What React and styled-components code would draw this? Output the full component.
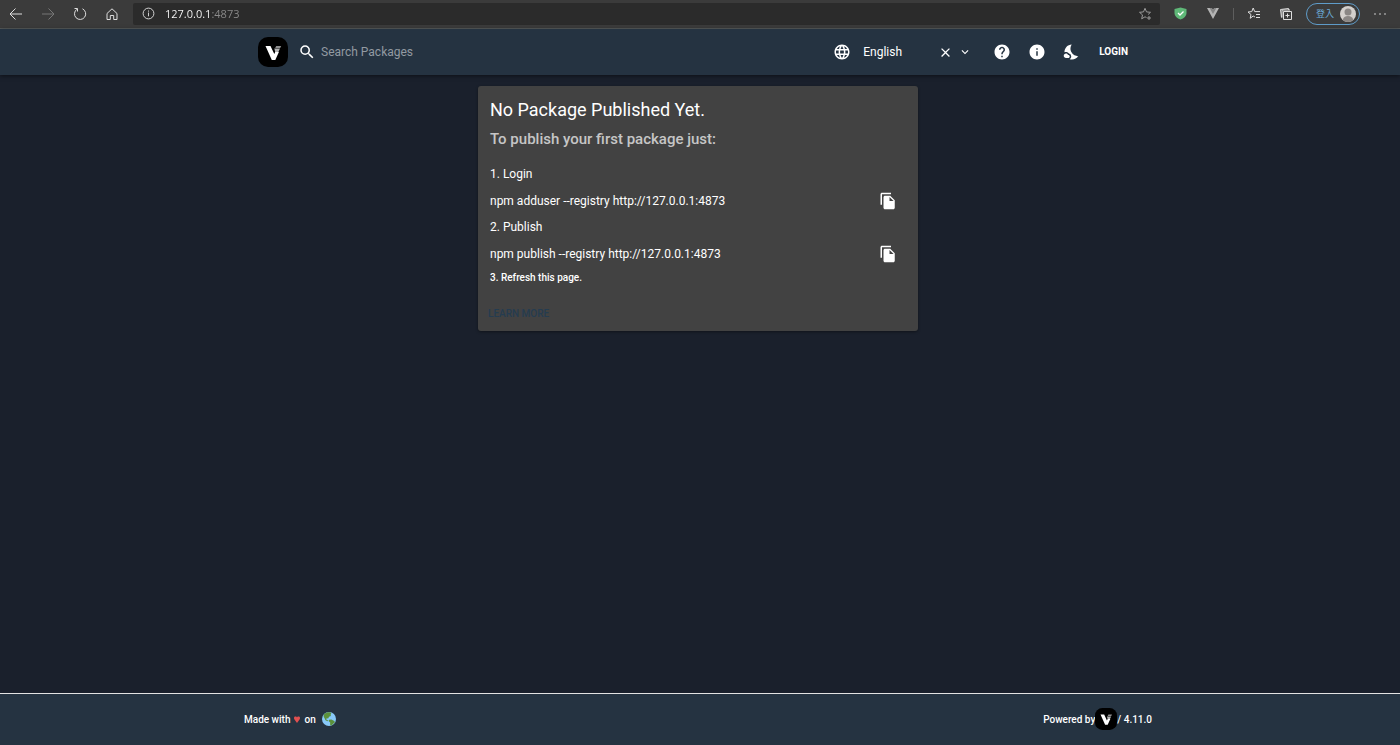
import React from "react";
import styled, { createGlobalStyle, css } from "styled-components";
import {
  MdSearch,
  MdLanguage,
  MdHelp,
  MdInfo,
  MdNightsStay,
  MdFileCopy,
  MdClose,
  MdExpandMore,
} from "react-icons/md";

const Global = createGlobalStyle`
  *, *::before, *::after { box-sizing: border-box; }
  body {
    margin: 0;
    background: #1a202c;
    color: #fff;
    font-family: Roboto, "Liberation Sans", sans-serif;
    font-size: 12px;
  }
  h1, h2, p { margin: 0; padding: 0; }
  button, input { font: inherit; color: inherit; margin: 0; }
`;

const Window = styled.div`
  min-height: 100vh;
  display: flex;
  flex-direction: column;
`;

/* Browser toolbar */

const BrowserBar = styled.div`
  display: flex;
  align-items: center;
  height: 29px;
  padding: 0 10px 1px 4px;
  background: #3b3b3b;
  border-bottom: 1px solid #565a5b;
  color: #dedede;
`;

const PlainButton = styled.button`
  display: inline-flex;
  align-items: center;
  justify-content: center;
  flex: none;
  padding: 0;
  border: 0;
  background: none;
  cursor: pointer;
`;

const BrowserButton = styled(PlainButton)`
  width: ${(p) => p.$width || 24}px;
  height: 22px;
  color: ${(p) => p.$color || "#dedede"};
`;

const NavButtons = styled.nav`
  display: flex;
  gap: 8px;
`;

const AddressBar = styled.label`
  display: flex;
  flex: 1;
  align-items: center;
  gap: 10px;
  height: 22px;
  margin: 0 9px;
  padding: 0 8px 0 9px;
  border-radius: 2px;
  background: #2b2b2b;
`;

const AddressInput = styled.input`
  flex: 1;
  min-width: 0;
  padding: 0;
  border: 0;
  outline: 0;
  font-family: "Open Sans", sans-serif;
  font-size: 11px;
  line-height: 16px;
  background: linear-gradient(to right, #fff 46px, #8c8c8c 46px);
  background-clip: text;
  -webkit-text-fill-color: transparent;
`;

const Extensions = styled.div`
  display: flex;
  align-items: center;
  gap: 8px;
`;

const Divider = styled.span`
  width: 1px;
  height: 12px;
  background: #5e5e5e;
`;

const ProfileButton = styled(PlainButton)`
  gap: 6px;
  height: 22px;
  padding: 0 3px 0 9px;
  margin-right: 2px;
  border: 1px solid #5f9cc9;
  border-radius: 11px;
  color: #6cabd8;
  font-family: "Noto Sans CJK TC", sans-serif;
  font-size: 9px;
`;

/* Application header */

const Header = styled.header`
  position: relative;
  height: 46px;
  padding-right: 4px;
  background: #253341;
  box-shadow: 0 1px 4px rgba(0, 0, 0, 0.5);
`;

const HeaderInner = styled.div`
  display: flex;
  align-items: center;
  justify-content: space-between;
  width: 100%;
  max-width: 908px;
  height: 100%;
  margin: 0 auto;
  padding: 0 14px;
`;

const HeaderGroup = styled.div`
  display: flex;
  align-items: center;
`;

const HomeLink = styled.a`
  display: flex;
`;

const SearchField = styled.label`
  display: flex;
  align-items: center;
  gap: 5px;
  margin-left: 10px;
`;

const TextInput = styled.input`
  width: ${(p) => p.$width}px;
  padding: 0;
  border: 0;
  outline: 0;
  background: none;
  line-height: 16px;
  &::placeholder {
    color: #929aa1;
    opacity: 1;
  }
`;

const LanguageField = styled.label`
  display: flex;
  align-items: center;
  gap: 12px;
`;

const SmallIconButton = styled(PlainButton)`
  width: 19px;
  height: 20px;
`;

const ActionGroup = styled.div`
  display: flex;
  align-items: center;
  margin-left: 10px;
`;

const IconButton = styled(PlainButton)`
  width: 35px;
  height: 35px;
`;

const LoginButton = styled(PlainButton)`
  padding: 4px 10px;
  font-size: 10px;
  font-weight: 700;
  line-height: 14px;
`;

/* Help card */

const Main = styled.main`
  flex: 1;
  padding: 11px 4px 11px 0;
`;

const Card = styled.section`
  width: 100%;
  max-width: 440px;
  margin: 0 auto;
  padding-bottom: 4px;
  border-radius: 3px;
  background: #424242;
  box-shadow: 0 1px 3px rgba(0, 0, 0, 0.4);
`;

const CardContent = styled.div`
  padding: 12px 13px 0 12px;
`;

const Title = styled.h1`
  font-size: 18px;
  font-weight: 400;
  line-height: 24px;
`;

const Subtitle = styled.h2`
  margin-top: 6px;
  color: #c6c6c6;
  font-size: 15px;
  font-weight: 500;
  line-height: 22px;
`;

const Steps = styled.div`
  margin-top: 16px;
`;

const StepLabel = styled.p`
  line-height: 17px;
  ${(p) =>
    p.$small &&
    css`
      font-size: 10px;
      font-weight: 500;
      line-height: 12px;
    `}
`;

const CommandRow = styled.div`
  display: flex;
  align-items: center;
  justify-content: space-between;
  height: 36px;
`;

const CardActions = styled.div`
  margin-top: 17px;
  padding: 0 4px;
`;

const LearnMore = styled.a`
  display: inline-block;
  padding: 6px;
  color: #253c50;
  font-size: 10px;
  font-weight: 500;
  line-height: 14px;
  text-decoration: none;
  vertical-align: top;
`;

/* Footer */

const Footer = styled.footer`
  padding: 0 4px 1px 0;
  border-top: 1px solid #e3e3e3;
  background: #253341;
  font-size: 10px;
  font-weight: 500;
`;

const FooterInner = styled.div`
  display: flex;
  align-items: center;
  justify-content: space-between;
  max-width: 908px;
  height: 50px;
  margin: 0 auto;
`;

const FooterText = styled.div`
  display: flex;
  align-items: center;
  gap: ${(p) => p.$gap || 0}px;
`;

const Planet = styled.svg`
  margin-left: 2px;
`;

function Stroke({ size = 14, width = 1, children }) {
  return (
    <svg
      width={size}
      height={size}
      viewBox="0 0 14 14"
      fill="none"
      stroke="currentColor"
      strokeWidth={width}
      aria-hidden="true"
    >
      {children}
    </svg>
  );
}

function Logo({ size }) {
  return (
    <svg width={size} height={size} viewBox="0 0 30 30" role="img" aria-label="Verdaccio">
      <rect width="30" height="30" rx="10" fill="#000" />
      <path d="M7.500 9H12.500l3.800 8 .9-1.900h3.700L17.300 23H13.800z" fill="#fff" />
      <path d="M18.200 9H23.200l-1 2h-5z" fill="#8f8f8f" />
      <path d="M16.300 11.500h5.700l-1.600 3.600h-3.200z" fill="#b5b5b5" />
    </svg>
  );
}

function Globe() {
  return (
    <Planet width="14" height="14" viewBox="0 0 36 36" role="img" aria-label="Earth">
      <circle cx="18" cy="18" r="18" fill="#88c9f9" />
      <path
        d="M6 5c4-4 10-5 16-4l2 3-2 3 1 3-5 2-2 5-4-1-1 3 5 3-2 2-5-3-3-6C4 12 3 8 6 5zM18 20l6-1 8 4 1 4-5 4-3 4-4-1v-7l-4-4z"
        fill="#5c913b"
      />
    </Planet>
  );
}

function Browser() {
  return (
    <BrowserBar>
      <NavButtons aria-label="Browser navigation">
        <BrowserButton aria-label="Back">
          <Stroke><path d="M13 7H1M6.500 1.500L1 7l5.500 5.500" /></Stroke>
        </BrowserButton>
        <BrowserButton aria-label="Forward" $color="#777">
          <Stroke><path d="M1 7h12M7.500 1.500L13 7l-5.500 5.500" /></Stroke>
        </BrowserButton>
        <BrowserButton aria-label="Reload">
          <Stroke><path d="M9.500 1.800A5.600 5.600 0 1 1 4 2.200M1.500 1.500h3v3" /></Stroke>
        </BrowserButton>
        <BrowserButton aria-label="Home">
          <Stroke><path d="M2 6.500L7 1.800l5 4.700v6H8.700V8.500H5.300v4H2z" /></Stroke>
        </BrowserButton>
      </NavButtons>
      <AddressBar>
        <Stroke size={13}>
          <circle cx="7" cy="7" r="5.800" />
          <path d="M7 6v4M7 3.800v1.200" />
        </Stroke>
        <AddressInput aria-label="Address" defaultValue="127.0.0.1:4873" />
        <BrowserButton aria-label="Add to favorites" $width={14} $color="#9a9a9a">
          <Stroke>
            <path d="M8.500 10.500L7 9.800l-3.300 2 .8-3.900L1.500 5.300l4-.4L7 1.300l1.500 3.600 4 .4-2.400 2.200M11 9v4M9 11h4" />
          </Stroke>
        </BrowserButton>
      </AddressBar>
      <Extensions>
        <BrowserButton aria-label="Security shield">
          <svg width="13" height="13" viewBox="0 0 13 13" aria-hidden="true">
            <path d="M6.500.5L12.500 2v4c0 3-2.500 5.300-6 6.500C3 11.300.5 9 .5 6V2z" fill="#5fb878" />
            <path d="M4 6l2 2 3.500-3.500" stroke="#fff" strokeWidth="1.300" fill="none" />
          </svg>
        </BrowserButton>
        <BrowserButton aria-label="Vue devtools">
          <svg width="12" height="11" viewBox="0 0 12 11" aria-hidden="true">
            <path d="M0 0h4.800L6 2l1.200-2H12L6 11z" fill="#b4b4b4" />
            <path d="M2.600 0h2.200L6 2l1.200-2h2.200L6 6z" fill="#858585" />
          </svg>
        </BrowserButton>
        <Divider />
        <BrowserButton aria-label="Favorites">
          <Stroke>
            <path d="M8 10l-1.800-1-3 2.300.8-3.800L1 5l3.800-.4L6.200 1l1.500 3.600H13M9 7.500h4M9 10.500h4" />
          </Stroke>
        </BrowserButton>
        <BrowserButton aria-label="Collections">
          <Stroke>
            <path d="M4.500 4.500h8v8h-8zM8.500 6.500v4M6.500 8.500h4M2.500 10.500l-1-8 8-1 .2 1.500M3 10.500V3h8" />
          </Stroke>
        </BrowserButton>
        <ProfileButton>
          登入
          <svg width="16" height="16" viewBox="0 0 16 16" aria-hidden="true">
            <circle cx="8" cy="8" r="8" fill="#d4d0cd" />
            <circle cx="8" cy="6" r="3.500" fill="#8b8785" />
            <path d="M2.800 14c.5-3 2.400-4 5.200-4s4.700 1 5.200 4A8 8 0 0 1 2.800 14z" fill="#8b8785" />
          </svg>
        </ProfileButton>
        <BrowserButton aria-label="Settings and more" $width={20}>
          <svg width="12" height="2" viewBox="0 0 12 2" fill="currentColor" aria-hidden="true">
            <circle cx="1" cy="1" r=".8" />
            <circle cx="6" cy="1" r=".8" />
            <circle cx="11" cy="1" r=".8" />
          </svg>
        </BrowserButton>
      </Extensions>
    </BrowserBar>
  );
}

function Command({ children }) {
  return (
    <CommandRow>
      <span>{children}</span>
      <IconButton aria-label="Copy to clipboard">
        <MdFileCopy size={18} />
      </IconButton>
    </CommandRow>
  );
}

export default function App() {
  return (
    <Window>
      <Global />
      <Browser />
      <Header>
        <HeaderInner>
          <HeaderGroup>
            <HomeLink href="#home"><Logo size={30} /></HomeLink>
            <SearchField>
              <MdSearch size={18} aria-hidden="true" />
              <TextInput $width={240} placeholder="Search Packages" aria-label="Search Packages" />
            </SearchField>
          </HeaderGroup>
          <HeaderGroup>
            <LanguageField>
              <MdLanguage size={18} aria-hidden="true" />
              <TextInput $width={73} defaultValue="English" aria-label="Language" />
            </LanguageField>
            <SmallIconButton aria-label="Clear"><MdClose size={15} /></SmallIconButton>
            <SmallIconButton aria-label="Open"><MdExpandMore size={14} /></SmallIconButton>
            <ActionGroup>
              <IconButton aria-label="Help"><MdHelp size={18} /></IconButton>
              <IconButton aria-label="Information"><MdInfo size={18} /></IconButton>
              <IconButton aria-label="Dark mode"><MdNightsStay size={18} /></IconButton>
            </ActionGroup>
            <LoginButton>LOGIN</LoginButton>
          </HeaderGroup>
        </HeaderInner>
      </Header>
      <Main>
        <Card>
          <CardContent>
            <Title>No Package Published Yet.</Title>
            <Subtitle>To publish your first package just:</Subtitle>
            <Steps>
              <StepLabel>1. Login</StepLabel>
              <Command>npm adduser --registry http://127.0.0.1:4873</Command>
              <StepLabel>2. Publish</StepLabel>
              <Command>npm publish --registry http://127.0.0.1:4873</Command>
              <StepLabel $small>3. Refresh this page.</StepLabel>
            </Steps>
          </CardContent>
          <CardActions>
            <LearnMore href="#learn-more">LEARN MORE</LearnMore>
          </CardActions>
        </Card>
      </Main>
      <Footer>
        <FooterInner>
          <FooterText $gap={4}>
            <span>Made with</span>
            <svg width="6" height="7" viewBox="0 0 6 7" role="img" aria-label="love">
              <path d="M3 7L.3 3.200C-.5 1.500.3.500 1.500.500 2.300.500 3 1 3 1.600 3 1 3.700.500 4.500.500 5.700.500 6.500 1.500 5.700 3.200z" fill="#e25050" />
            </svg>
            <span>on</span>
            <Globe />
          </FooterText>
          <FooterText>
            <span>Powered by</span>
            <Logo size={22} />
            <span>/ 4.11.0</span>
          </FooterText>
        </FooterInner>
      </Footer>
    </Window>
  );
}
